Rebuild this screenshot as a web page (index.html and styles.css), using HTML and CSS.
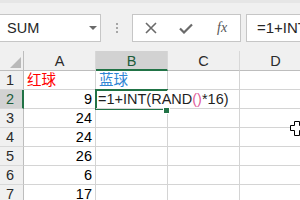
FILE: index.html
```html
<!DOCTYPE html>
<html>
<head>
<meta charset="utf-8">
<link rel="stylesheet" href="styles.css">
</head>
<body>
<div class="app">
  <div class="toolbar">
    <div class="namebox">
      <span class="name">SUM</span>
      <span class="caret"></span>
    </div>
    <div class="grip"><i></i><i></i><i></i></div>
    <div class="buttons">
      <svg class="ico-x" width="12" height="12" viewBox="0 0 12 12"><path d="M1 1L11 11M11 1L1 11" stroke="#6a6a6a" stroke-width="1.6" fill="none"/></svg>
      <svg class="ico-check" width="14" height="11" viewBox="0 0 14 11"><path d="M1 5.5L5 9.5L13 1.5" stroke="#6a6a6a" stroke-width="2.2" fill="none"/></svg>
      <span class="fx">fx</span>
    </div>
    <div class="formula">=1+INT(RAND()*16)</div>
  </div>
  <div class="sheet">
    <div class="corner"><span class="tri"></span></div>
    <div class="ch">A</div>
    <div class="ch sel">B</div>
    <div class="ch">C</div>
    <div class="ch">D</div>

    <div class="rh">1</div>
    <div class="c red">红球</div>
    <div class="c blue">蓝球</div>
    <div class="c"></div>
    <div class="c"></div>

    <div class="rh rsel">2</div>
    <div class="c num">9</div>
    <div class="c cb2"><span class="edit">=1+INT(RAND<span class="paren">()</span>*16)</span></div>
    <div class="c"></div>
    <div class="c"></div>

    <div class="rh">3</div>
    <div class="c num">24</div>
    <div class="c"></div>
    <div class="c"></div>
    <div class="c"></div>

    <div class="rh">4</div>
    <div class="c num">24</div>
    <div class="c"></div>
    <div class="c"></div>
    <div class="c"></div>

    <div class="rh">5</div>
    <div class="c num">26</div>
    <div class="c"></div>
    <div class="c"></div>
    <div class="c"></div>

    <div class="rh">6</div>
    <div class="c num">6</div>
    <div class="c"></div>
    <div class="c"></div>
    <div class="c"></div>

    <div class="rh">7</div>
    <div class="c num">17</div>
    <div class="c"></div>
    <div class="c"></div>
    <div class="c"></div>

    <div class="active"></div>
    <div class="handle"></div>
  </div>
  <svg class="cursor" width="14" height="15" viewBox="0 0 14 15"><path d="M4.5 0.5H9.5V4.5H13.5V9.5H9.5V14.5H4.5V9.5H0.5V4.5H4.5Z" fill="#fff" stroke="#000" stroke-width="1"/></svg>
</div>
</body>
</html>
```

FILE: styles.css
```css
html, body {
  margin: 0;
  padding: 0;
}
body {
  width: 300px;
  height: 200px;
  overflow: hidden;
  background: #fff;
  font-family: "Liberation Sans", Arial, "Noto Sans CJK SC", sans-serif;
}
.app {
  position: relative;
  width: 300px;
  height: 200px;
  overflow: hidden;
}
.toolbar {
  height: 51px;
  box-sizing: border-box;
  background: #f0f0f0;
  border-top: 3px solid #e6e6e6;
  padding-top: 11px;
  display: flex;
  align-items: flex-start;
  white-space: nowrap;
}
.namebox {
  width: 101px;
  height: 28px;
  box-sizing: border-box;
  background: #fff;
  border: 1px solid #c6c6c6;
  border-left: none;
  display: flex;
  align-items: center;
  padding-left: 7px;
  position: relative;
}
.name {
  font-size: 14.5px;
  color: #262626;
}
.caret {
  position: absolute;
  left: 89px;
  top: 11px;
  width: 0;
  height: 0;
  border-left: 4px solid transparent;
  border-right: 4px solid transparent;
  border-top: 4px solid #6a6a6a;
}
.grip {
  width: 31px;
  height: 28px;
  display: flex;
  flex-direction: column;
  align-items: center;
  justify-content: center;
  gap: 2px;
}
.grip i {
  display: block;
  width: 2px;
  height: 2px;
  background: #a6a6a6;
}
.buttons {
  width: 109px;
  height: 28px;
  box-sizing: border-box;
  background: #fff;
  border: 1px solid #c6c6c6;
  display: flex;
  align-items: center;
  padding-left: 12px;
}
.ico-check {
  margin-left: 22px;
}
.fx {
  margin-left: 24px;
  font-family: "Liberation Serif", serif;
  font-style: italic;
  font-size: 14px;
  color: #555;
}
.formula {
  margin-left: 5px;
  flex: 1;
  height: 28px;
  box-sizing: border-box;
  background: #fff;
  border: 1px solid #c6c6c6;
  border-right: none;
  padding-left: 10px;
  font-size: 15px;
  line-height: 26px;
  color: #262626;
  overflow: hidden;
}
.sheet {
  position: relative;
  display: grid;
  grid-template-columns: 24px 72px 72px 72px 72px;
  grid-template-rows: 20px repeat(7, 19px);
  font-size: 14.5px;
}
.corner, .ch, .rh, .c {
  box-sizing: border-box;
  border-right: 1px solid #d4d4d4;
  border-bottom: 1px solid #d4d4d4;
  white-space: nowrap;
}
.corner {
  background: #f0f0f0;
  border-right-color: #bdbdbd;
  border-bottom-color: #bdbdbd;
  position: relative;
}
.tri {
  position: absolute;
  right: 2px;
  bottom: 2px;
  width: 0;
  height: 0;
  border-left: 11px solid transparent;
  border-bottom: 11px solid #b9b9b9;
}
.ch {
  background: #f0f0f0;
  border-bottom-color: #bdbdbd;
  border-right-color: #d8d8d8;
  text-align: center;
  color: #2b2b2b;
  line-height: 20px;
}
.ch.sel {
  background: #d2d2d2;
  color: #1d5c3a;
  border-bottom: 2px solid #217346;
}
.rh {
  background: #f0f0f0;
  border-right-color: #bdbdbd;
  border-bottom-color: #d8d8d8;
  padding-left: 6px;
  color: #2b2b2b;
  line-height: 19px;
}
.rh.rsel {
  background: #d2d2d2;
  color: #1d5c3a;
  border-right: 2px solid #217346;
}
.c {
  line-height: 19px;
  padding: 0 3px;
  color: #000;
}
.num {
  text-align: right;
}
.red {
  color: #ff0000;
}
.blue {
  color: #2f86d4;
}
.cb2 {
  overflow: visible;
  position: relative;
  z-index: 2;
  padding-left: 1px;
}
.edit {
  display: inline-block;
  margin-top: 1px;
  height: 17px;
  line-height: 17px;
  padding-left: 1px;
  padding-right: 3px;
  background: #fff;
  color: #1f1f1f;
  vertical-align: top;
}
.paren {
  color: #e0609a;
}
.active {
  position: absolute;
  z-index: 1;
  left: 95px;
  top: 38px;
  width: 73px;
  height: 21px;
  box-sizing: border-box;
  border: 2px solid #217346;
  pointer-events: none;
}
.handle {
  position: absolute;
  z-index: 3;
  left: 163px;
  top: 56px;
  width: 5px;
  height: 5px;
  background: #217346;
  border: 1px solid #fff;
}
.cursor {
  position: absolute;
  left: 290px;
  top: 121px;
}
```
